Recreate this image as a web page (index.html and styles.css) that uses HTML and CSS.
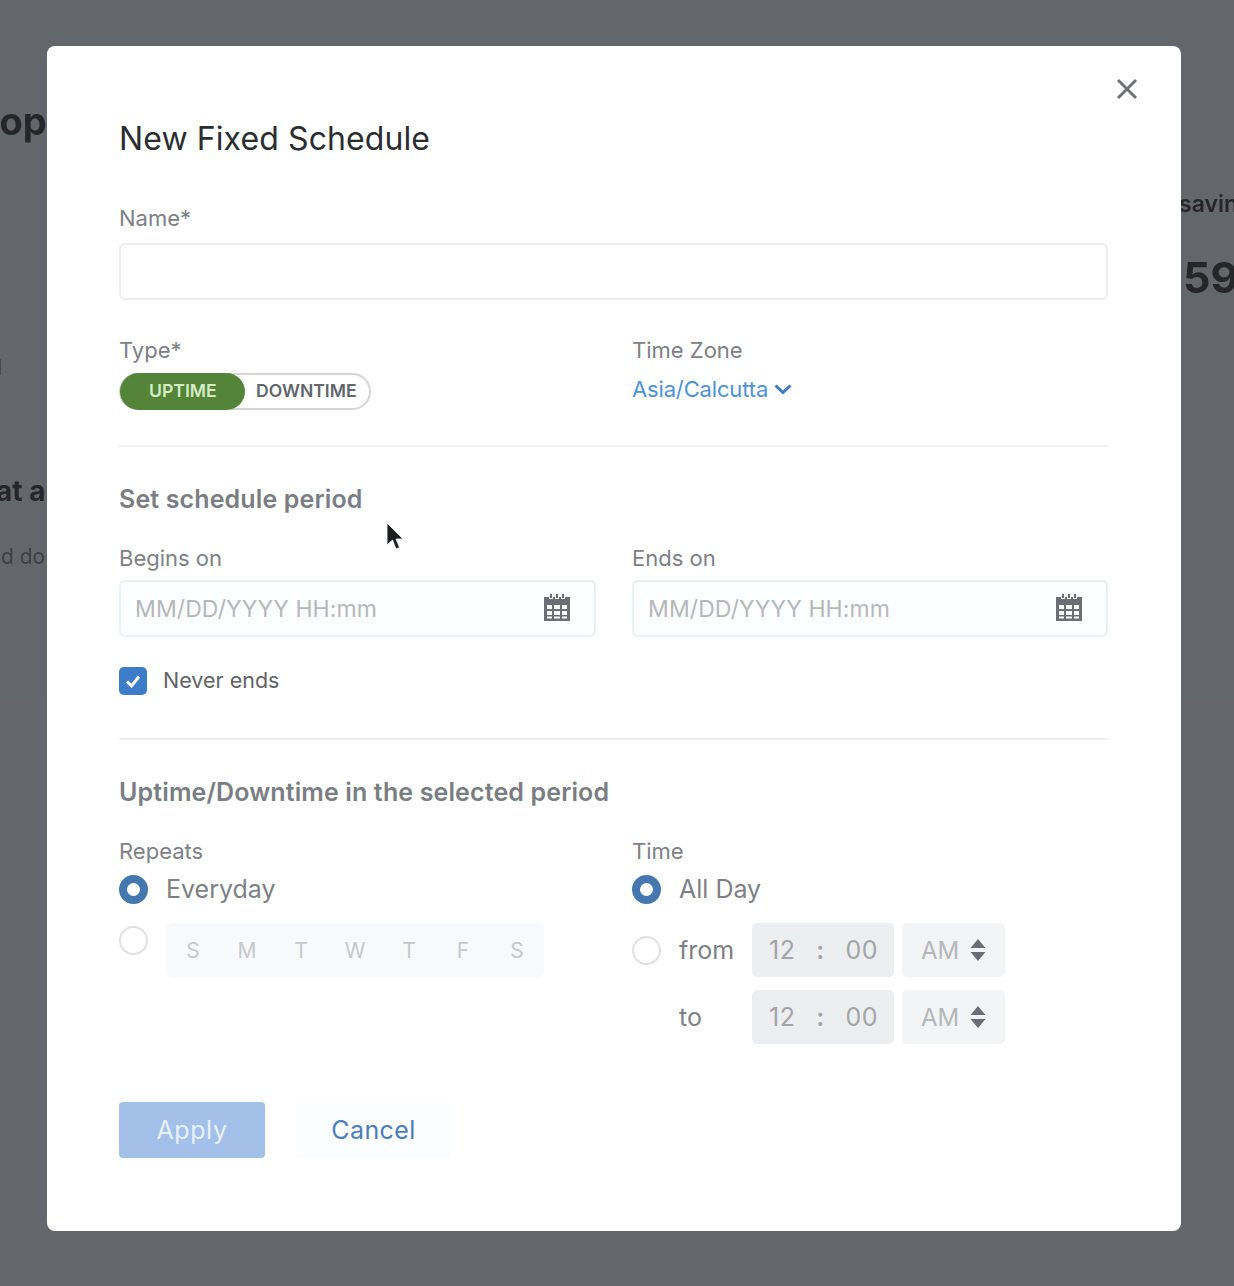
FILE: index.html
```html
<!DOCTYPE html>
<html lang="en">
<head>
  <meta charset="UTF-8">
  <title>New Fixed Schedule</title>
  <link rel="stylesheet" href="styles.css">
</head>
<body>

  <!-- page behind the dialog -->
  <div class="bg-lower"></div>
  <div class="backdrop-text bg-top">top</div>
  <div class="backdrop-text bg-mark">l</div>
  <div class="backdrop-text bg-mid">at a</div>
  <div class="backdrop-text bg-small">d do</div>
  <div class="backdrop-text bg-saving">savin</div>
  <div class="backdrop-text bg-num">59</div>

  <div class="modal">
    <button class="close" type="button" aria-label="Close">
      <svg width="24" height="24" viewBox="0 0 24 24"><path d="M3 3 L21 21 M21 3 L3 21" stroke="#6f7276" stroke-width="3" fill="none"/></svg>
    </button>

    <h2 class="title">New Fixed Schedule</h2>

    <label class="label">Name*</label>
    <div class="input name-input"></div>

    <div class="cols type-row">
      <div>
        <label class="label">Type*</label>
        <div class="toggle">
          <span class="toggle-on">UPTIME</span>
          <span class="toggle-off">DOWNTIME</span>
        </div>
      </div>
      <div>
        <label class="label">Time Zone</label>
        <a class="zone" href="#">Asia/Calcutta
          <svg width="20" height="12" viewBox="0 0 20 12"><path d="M2.500 2.500 L10 9.500 L17.500 2.500" stroke="#3d7cc4" stroke-width="3" fill="none"/></svg>
        </a>
      </div>
    </div>

    <hr class="divider">

    <h3 class="section-title">Set schedule period</h3>
    <div class="cols">
      <div>
        <label class="label">Begins on</label>
        <div class="input date-input">
          <span>MM/DD/YYYY HH:mm</span>
          <svg class="cal" width="28" height="28" viewBox="0 0 28 28"><path fill="#6b6e72" fill-rule="evenodd" d="M7 0h2v4H7zM13 0h2v4h-2zM19 0h2v4h-2zM1 3h5v2h4V3h2v2h4V3h2v2h4V3h5v24H1zM4 11v4h5v-4zm7 0v4h6v-4zm8 0v4h5v-4zM4 17v4h5v-4zm7 0v4h6v-4zm8 0v4h5v-4zM4 22.500v2h5v-2zm7 0v2h6v-2zm8 0v2h5v-2z"/></svg>
        </div>
      </div>
      <div>
        <label class="label">Ends on</label>
        <div class="input date-input">
          <span>MM/DD/YYYY HH:mm</span>
          <svg class="cal" width="28" height="28" viewBox="0 0 28 28"><path fill="#6b6e72" fill-rule="evenodd" d="M7 0h2v4H7zM13 0h2v4h-2zM19 0h2v4h-2zM1 3h5v2h4V3h2v2h4V3h2v2h4V3h5v24H1zM4 11v4h5v-4zm7 0v4h6v-4zm8 0v4h5v-4zM4 17v4h5v-4zm7 0v4h6v-4zm8 0v4h5v-4zM4 22.500v2h5v-2zm7 0v2h6v-2zm8 0v2h5v-2z"/></svg>
        </div>
      </div>
    </div>

    <div class="check-row">
      <span class="checkbox">
        <svg width="20" height="20" viewBox="0 0 20 20"><path d="M4 10.500 L8.500 15 L16 5.500" stroke="#fff" stroke-width="3" fill="none"/></svg>
      </span>
      <span class="check-label">Never ends</span>
    </div>

    <hr class="divider divider-two">

    <h3 class="section-title">Uptime/Downtime in the selected period</h3>
    <div class="cols">
      <div>
        <label class="label">Repeats</label>
        <div class="radio-row">
          <span class="radio selected"></span>
          <span class="option">Everyday</span>
        </div>
        <div class="days-row">
          <span class="radio"></span>
          <div class="days">
            <span>S</span><span>M</span><span>T</span><span>W</span><span>T</span><span>F</span><span>S</span>
          </div>
        </div>
      </div>
      <div>
        <label class="label">Time</label>
        <div class="radio-row">
          <span class="radio selected"></span>
          <span class="option">All Day</span>
        </div>
        <div class="time-row">
          <span class="radio"></span>
          <span class="option time-word">from</span>
          <div class="clock"><span>12</span><span class="colon">:</span><span>00</span></div>
          <div class="ampm">AM
            <svg width="16" height="24" viewBox="0 0 16 24"><path fill="#6b6e72" d="M8 1 L15.500 10 H0.500 Z M8 23 L0.500 14 H15.500 Z"/></svg>
          </div>
        </div>
        <div class="time-row to-row">
          <span class="radio-space"></span>
          <span class="option time-word">to</span>
          <div class="clock"><span>12</span><span class="colon">:</span><span>00</span></div>
          <div class="ampm">AM
            <svg width="16" height="24" viewBox="0 0 16 24"><path fill="#6b6e72" d="M8 1 L15.500 10 H0.500 Z M8 23 L0.500 14 H15.500 Z"/></svg>
          </div>
        </div>
      </div>
    </div>

    <div class="actions">
      <button class="btn-apply" type="button">Apply</button>
      <button class="btn-cancel" type="button">Cancel</button>
    </div>
  </div>

  <!-- mouse pointer in the recording -->
  <svg class="pointer" width="20" height="30" viewBox="0 0 20 30"><path fill="#1d1e20" stroke="#fff" stroke-width="0.800" d="M2 1 L2 23 L7.500 18 L11 27 L14.500 25.500 L11 17 L18 17 Z"/></svg>

</body>
</html>
```

FILE: styles.css
```css
* {
  box-sizing: border-box;
}
html, body {
  height: 100%;
}
body {
  margin: 0;
  height: 1286px;
  overflow: hidden;
  position: relative;
  background-color: #63666b;
  font-family: Inter, "Liberation Sans", sans-serif;
  color: #6f7276;
}
.bg-lower {
  position: absolute;
  left: 0;
  right: 0;
  top: 695px;
  bottom: 0;
  background-color: #65676c;
}
.backdrop-text {
  position: absolute;
  color: #24262a;
  font-weight: 700;
  white-space: nowrap;
  filter: blur(0.6px);
}
.bg-top {
  left: -14px;
  top: 99px;
  font-size: 38px;
  line-height: 44px;
}
.bg-mark {
  left: -3px;
  top: 352px;
  font-size: 22px;
  line-height: 30px;
  font-weight: 400;
  color: #3d4044;
}
.bg-mid {
  left: -4px;
  top: 474px;
  font-size: 28px;
  line-height: 34px;
}
.bg-small {
  left: 1px;
  top: 544px;
  font-size: 21px;
  line-height: 26px;
  font-weight: 400;
  color: #3d4044;
}
.bg-saving {
  left: 1179px;
  top: 190px;
  font-size: 23px;
  line-height: 28px;
  font-weight: 600;
}
.bg-num {
  left: 1183px;
  top: 252px;
  font-size: 43px;
  line-height: 50px;
}
.modal {
  position: absolute;
  left: 47px;
  top: 46px;
  width: 1134px;
  height: 1185px;
  padding: 72px 73px 0 72px;
  background-color: #fff;
  border-radius: 8px;
}
.close {
  position: absolute;
  right: 42px;
  top: 31px;
  width: 24px;
  height: 24px;
  padding: 0;
  border: none;
  background: none;
}
.title {
  margin: 0 0 44px;
  font-size: 32px;
  line-height: 42px;
  font-weight: 400;
  letter-spacing: 0.1px;
  color: #2b2d31;
}
.label {
  display: block;
  font-size: 22px;
  line-height: 28px;
  color: #7d8085;
}
.input {
  height: 57px;
  margin-top: 11px;
  border: 2px solid #eceef1;
  border-radius: 6px;
  background-color: #fff;
}
.cols {
  display: grid;
  grid-template-columns: 477px 476px;
  gap: 36px;
}
.type-row {
  margin-top: 36px;
}
.toggle {
  display: flex;
  align-items: center;
  width: 252px;
  height: 37px;
  margin-top: 9px;
  border: 2px solid #d4d5d8;
  border-radius: 19px;
  font-size: 17.6px;
  font-weight: 600;
  line-height: 35px;
}
.toggle-on {
  width: 125px;
  height: 37px;
  margin: 0 0 0 -1px;
  padding-left: 29px;
  line-height: 35px;
  border-radius: 19px;
  background-color: #548438;
  color: #d5ecc6;
}
.toggle-off {
  padding-left: 11px;
  padding-bottom: 2px;
  color: #63666b;
}
.zone {
  display: flex;
  align-items: center;
  gap: 5px;
  margin-top: 11px;
  font-size: 22px;
  line-height: 28px;
  letter-spacing: -0.15px;
  color: #4d92d6;
  text-decoration: none;
}
.divider {
  height: 2px;
  margin: 35px 0 0;
  border: none;
  background-color: #eef0f2;
}
.divider-two {
  margin-top: 43px;
}
.section-title {
  margin: 36px 0 29px;
  font-size: 25px;
  line-height: 32px;
  font-weight: 600;
  letter-spacing: 0.13px;
  color: #7a7d82;
}
.date-input {
  display: flex;
  align-items: center;
  justify-content: space-between;
  margin-top: 8px;
  padding: 0 23px 0 14px;
  font-size: 23px;
  letter-spacing: 0.1px;
  color: #b5b7ba;
  border-color: #e9f0f8;
  background-color: #fdfeff;
}
.cal {
  margin-top: -2px;
}
.check-row {
  display: flex;
  align-items: center;
  gap: 16px;
  margin-top: 30px;
}
.checkbox {
  display: flex;
  align-items: center;
  justify-content: center;
  width: 28px;
  height: 28px;
  border-radius: 5px;
  background-color: #3d7cc9;
}
.check-label {
  font-size: 21.5px;
  line-height: 26px;
  color: #5f6266;
  margin-bottom: 2px;
}
.radio-row {
  display: flex;
  align-items: center;
  gap: 18px;
  height: 34px;
  margin-top: 7px;
}
.radio {
  flex: none;
  width: 29px;
  height: 29px;
  border: 2px solid #dfe0e3;
  border-radius: 50%;
  background-color: #fff;
}
.radio.selected {
  border: 8px solid #4478ae;
}
.option {
  font-size: 25px;
  line-height: 32px;
  color: #7d8085;
}
.days-row {
  display: flex;
  align-items: flex-start;
  gap: 18px;
  margin-top: 17px;
}
.days-row .radio {
  margin-top: 3px;
}
.days {
  display: flex;
  width: 378px;
  height: 54px;
  border-radius: 6px;
  background-color: #f8f9fa;
  font-size: 21px;
  color: #c6c8cb;
}
.days span {
  flex: 1;
  text-align: center;
  line-height: 56px;
}
.time-row {
  display: flex;
  align-items: center;
  height: 54px;
  margin-top: 17px;
}
.to-row {
  margin-top: 13px;
}
.radio-space {
  flex: none;
  width: 29px;
}
.time-word {
  width: 91px;
  padding-left: 18px;
}
.clock {
  display: flex;
  align-items: center;
  justify-content: space-between;
  width: 142px;
  height: 54px;
  padding: 0 16px 0 17px;
  border-radius: 5px;
  background-color: #eceef0;
  font-size: 25px;
  letter-spacing: 0.5px;
  color: #a3a5a9;
}
.colon {
  font-weight: 600;
}
.ampm {
  display: flex;
  align-items: center;
  gap: 11px;
  width: 103px;
  height: 54px;
  margin-left: 8px;
  padding-left: 19px;
  border-radius: 5px;
  background-color: #f3f4f5;
  font-size: 24px;
  color: #b5b7ba;
}
.actions {
  display: flex;
  gap: 31px;
  margin-top: 58px;
}
.btn-apply {
  width: 146px;
  height: 56px;
  border: none;
  border-radius: 4px;
  background-color: #a3c0e8;
  color: #e9f1fb;
  font-family: inherit;
  font-size: 25px;
  letter-spacing: 0.6px;
}
.btn-cancel {
  width: 155px;
  height: 56px;
  border: none;
  border-radius: 4px;
  background-color: #fcfdfe;
  color: #4b7cbc;
  font-family: inherit;
  font-size: 25px;
  letter-spacing: 0.4px;
}
.pointer {
  position: absolute;
  left: 385px;
  top: 522px;
}
```
